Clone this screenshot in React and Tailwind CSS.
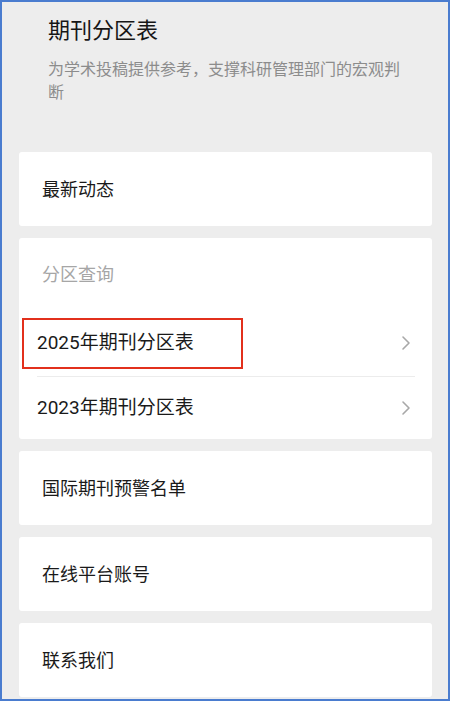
import React from 'react';

const font = { fontFamily: 'Roboto, "Noto Sans CJK SC", sans-serif' };

function Chevron() {
  return (
    <svg width="10" height="16" viewBox="0 0 10 16" fill="none" className="shrink-0">
      <path d="M2 2l6 6-6 6" stroke="#a8a8a8" strokeWidth="1.6" strokeLinecap="round" strokeLinejoin="round" />
    </svg>
  );
}

function Card({ children }) {
  return (
    <div className="ml-[17px] mr-[16px] h-[74px] bg-white rounded-[3px] flex items-center pl-[23px] text-[18px] text-[#1a1a1a] shrink-0">
      {children}
    </div>
  );
}

export default function App() {
  return (
    <div
      className="w-[450px] h-[701px] border-2 border-[#4a7ccf] bg-[#ededed] overflow-hidden flex flex-col"
      style={font}
    >
      <div className="pl-[46px] pr-[48px] pt-[14px]">
        <h1 className="text-[22px] leading-[30px] text-[#161616]">期刊分区表</h1>
        <p className="mt-[12px] text-[16px] leading-[23px] text-[#8c8c8c]">
          为学术投稿提供参考，支撑科研管理部门的宏观判断
        </p>
      </div>

      <div className="mt-[48px] flex flex-col gap-[12px]">
        <Card>最新动态</Card>

        <div className="relative ml-[17px] mr-[16px] h-[201px] bg-white rounded-[3px] shrink-0 flex flex-col">
          <div className="h-[72px] flex items-center pl-[23px] text-[18px] text-[#a6a6a6]">分区查询</div>
          <div className="h-[66px] flex items-center justify-between pl-[18px] pr-[21px] text-[19px] text-[#1a1a1a]">
            <span>2025年期刊分区表</span>
            <Chevron />
          </div>
          <div className="ml-[18px] mr-[17px] h-px bg-[#ececec]" />
          <div className="h-[62px] flex items-center justify-between pl-[18px] pr-[21px] text-[19px] text-[#1a1a1a]">
            <span>2023年期刊分区表</span>
            <Chevron />
          </div>
          <div className="absolute left-[3px] top-[80px] w-[221px] h-[51px] border-2 border-[#e2301c]" />
        </div>

        <Card>国际期刊预警名单</Card>
        <Card>在线平台账号</Card>
        <Card>联系我们</Card>
      </div>
    </div>
  );
}
